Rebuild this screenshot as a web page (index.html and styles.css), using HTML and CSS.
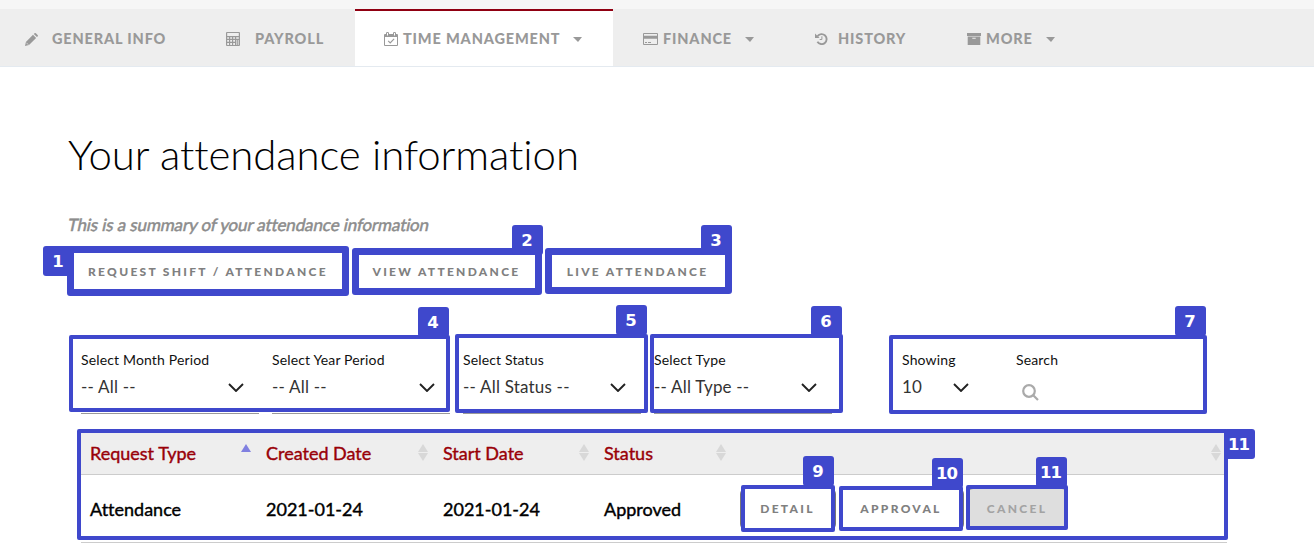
FILE: index.html
```html
<!DOCTYPE html>
<html lang="en">
<head>
<meta charset="utf-8">
<title>Your attendance information</title>
<link rel="stylesheet" href="styles.css">
</head>
<body>
<div class="page">
<nav class="tabs">
  <a class="tab tab-general"><svg class="icon" width="13" height="13" viewBox="0 0 13 13"><path d="M0 13l.9-4.1L8 1.8 11.1 5 4 12.1zM8.8 1l.7-.7q.7-.6 1.4 0L12.600 2q.7.7 0 1.400l-.7.7z"/><path d="M1.300 9.700l2 2" stroke="#eee" stroke-width=".7"/></svg><span>GENERAL INFO</span></a>
  <a class="tab tab-payroll"><svg class="icon" width="14" height="14" viewBox="0 0 14 14"><path fill-rule="evenodd" d="M1 0h12q1 0 1 1v12q0 1-1 1H1q-1 0-1-1V1q0-1 1-1zM1.200 1v3h11.600V1zM1.200 5.200v1.600H3V5.200zM4.200 5.200v1.600H6V5.200zM7.200 5.200v1.600H9V5.200zM10.200 5.200v1.600h2.600V5.200zM1.200 8v1.800H3V8zM4.200 8v1.800H6V8zM7.200 8v1.800H9V8zM1.200 11v1.900H3V11zM4.200 11v1.900H6V11zM7.200 11v1.900H9V11zM10.400 8v4.900h.8V8zM12.200 8v4.900h.6V8z"/></svg><span>PAYROLL</span></a>
  <a class="tab tab-time active"><svg class="icon" width="14" height="14" viewBox="0 0 14 14"><path fill-rule="evenodd" d="M1 2h1V1q0-1 1.500-1T5 1v1h4V1q0-1 1.500-1T12 1v1h1q1 0 1 1v10q0 1-1 1H1q-1 0-1-1V3q0-1 1-1zM1 5v8h12V5zM3 1v2.500h1V1zM10 1v2.500h1V1z"/><path d="M4.200 8.800l2 2 3.900-3.900" fill="none" stroke="#999" stroke-width="1.200"/></svg><span>TIME MANAGEMENT</span><i class="caret"></i></a>
  <a class="tab tab-finance"><svg class="icon" width="15" height="12" viewBox="0 0 15 12"><path fill-rule="evenodd" d="M1 0h13q1 0 1 1v10q0 1-1 1H1q-1 0-1-1V1q0-1 1-1zM1 1v1.700h13V1zM1 5.800V11h13V5.800z"/><path d="M2 9h2v1H2zM5 9h3v1H5z"/></svg><span>FINANCE</span><i class="caret"></i></a>
  <a class="tab tab-history"><svg class="icon" width="13" height="12" viewBox="0 0 13 12"><path d="M2.600 3.100A5 5 0 1 1 2.400 8.800" fill="none" stroke="#999" stroke-width="1.900"/><path d="M0 .5v4.400h4.600z"/><path d="M6.900 3.300v3.200H4.700" fill="none" stroke="#999"/></svg><span>HISTORY</span></a>
  <a class="tab tab-more"><svg class="icon" width="14" height="12" viewBox="0 0 14 12"><path fill-rule="evenodd" d="M0 0h14v3H0zM.7 3.600h12.600V12H.7zM5.300 4.700v1h3.400v-1z"/></svg><span>MORE</span><i class="caret"></i></a>
</nav>
<main class="content">
  <h1 class="title">Your attendance information</h1>
  <p class="summary">This is a summary of your attendance information</p>
  <div class="actions">
    <button class="btn btn-request">REQUEST SHIFT / ATTENDANCE</button>
    <button class="btn btn-view">VIEW ATTENDANCE</button>
    <button class="btn btn-live">LIVE ATTENDANCE</button>
  </div>
  <div class="filters">
    <label class="field"><span class="label">Select Month Period</span><span class="select">-- All --<svg class="chevron" viewBox="0 0 16 9"><path d="M1 1l7 7 7-7"/></svg></span></label>
    <label class="field"><span class="label">Select Year Period</span><span class="select">-- All --<svg class="chevron" viewBox="0 0 16 9"><path d="M1 1l7 7 7-7"/></svg></span></label>
    <label class="field"><span class="label">Select Status</span><span class="select">-- All Status --<svg class="chevron" viewBox="0 0 16 9"><path d="M1 1l7 7 7-7"/></svg></span></label>
    <label class="field"><span class="label">Select Type</span><span class="select">-- All Type --<svg class="chevron" viewBox="0 0 16 9"><path d="M1 1l7 7 7-7"/></svg></span></label>
    <label class="field field-count"><span class="label">Showing</span><span class="select plain">10<svg class="chevron" viewBox="0 0 16 9"><path d="M1 1l7 7 7-7"/></svg></span></label>
    <label class="field field-search"><span class="label">Search</span><svg class="search" width="17" height="17" viewBox="0 0 17 17"><circle cx="7" cy="7" r="5.800"/><path d="M11 11l5 5"/></svg></label>
  </div>
  <div class="table">
    <div class="row head">
      <div class="cell">Request Type<span class="sort asc"><i class="up"></i></span></div>
      <div class="cell">Created Date<span class="sort"><i class="up"></i><i class="down"></i></span></div>
      <div class="cell">Start Date<span class="sort"><i class="up"></i><i class="down"></i></span></div>
      <div class="cell">Status<span class="sort"><i class="up"></i><i class="down"></i></span></div>
      <div class="cell"><span></span><span class="sort"><i class="up"></i><i class="down"></i></span></div>
    </div>
    <div class="row body">
      <div class="cell">Attendance</div>
      <div class="cell">2021-01-24</div>
      <div class="cell">2021-01-24</div>
      <div class="cell">Approved</div>
      <div class="cell cell-actions">
        <button class="btn small btn-detail">DETAIL</button>
        <button class="btn small btn-approval">APPROVAL</button>
        <button class="btn small btn-cancel">CANCEL</button>
      </div>
    </div>
  </div>
</main>
<div class="frame thick f1"></div><b class="badge b1">1</b>
<div class="frame thick f2"></div><b class="badge b2">2</b>
<div class="frame thick f3"></div><b class="badge b3">3</b>
<div class="frame f4"></div><b class="badge b4">4</b>
<div class="frame f5"></div><b class="badge b5">5</b>
<div class="frame f6"></div><b class="badge b6">6</b>
<div class="frame f7"></div><b class="badge b7">7</b>
<div class="frame f8"></div><b class="badge b8">11</b>
<div class="frame f9"></div><b class="badge b9">9</b>
<div class="frame f10"></div><b class="badge b10">10</b>
<div class="frame f11"></div><b class="badge b11">11</b>
</div>
</body>
</html>
```
FILE: styles.css
```css
* { box-sizing: border-box; }
body { margin: 0; background: #fff; font-family: Lato, sans-serif; font-variant-ligatures: none; color: #000; }
.page { position: relative; width: 1314px; height: 544px; overflow: hidden; border-top: 9px solid #f6f6f6; }

/* Navigation */
.tabs { display: flex; height: 58px; background: #eee; border-bottom: 1px solid #e4eaf0; }
.tab { display: flex; align-items: center; padding: 3px 0 0 30px; color: #999; font-size: 14.500px; font-weight: 900; letter-spacing: .85px; white-space: nowrap; }
.tab span { margin-top: -2px; }
.tab-general { width: 196px; padding-left: 25px; }
.tab-payroll { width: 159px; }
.tab-time { width: 258px; padding-left: 29px; }
.tab-finance { width: 171px; }
.tab-history { width: 152px; padding-left: 31px; }
.tab-more { width: 147px; padding-left: 31px; }
.tab.active { background: #fff; border-top: 2px solid #900012; padding-top: 1px; }
.icon { fill: #999; margin-right: 5px; flex: none; }
.tab-general .icon, .tab-payroll .icon { margin-right: 15px; }
.tab-general .icon { margin-right: 14px; }
.tab-history .icon { margin-right: 10px; }
.caret { border: 4.500px solid transparent; border-left-width: 5px; border-top: 5px solid #999; border-bottom: 0; margin-left: 13px; }

/* Page heading */
.content { padding: 61px 0 0 68px; }
.title { margin: 0; height: 52px; line-height: 52px; font-size: 42px; font-weight: 300; letter-spacing: -.1px; white-space: nowrap; }
.summary { margin: 32px 0 0; height: 26px; line-height: 26px; width: max-content; font-size: 17px; letter-spacing: -.12px; transform: skewX(-12deg); color: #8c8c8c; -webkit-text-stroke: .5px #8c8c8c; white-space: nowrap; }
.actions { display: flex; gap: 4px; margin-top: 10px; height: 46px; }
.btn { padding: 0; border: 1px solid #777; border-radius: 5px; background: #fff; color: #808080; font: 900 12px Lato, sans-serif; letter-spacing: 2.300px; text-align: center; white-space: nowrap; }
.btn-request { width: 280px; }
.btn-view { width: 189px; }
.btn-live { width: 185px; height: 45px; padding-top: 1px; }

/* Filters */
.filters { display: flex; gap: 13px; margin: 56px 0 0 13px; height: 64px; }
.field { display: flex; flex-direction: column; width: 178px; }
.label { height: 20px; line-height: 20px; font-size: 14px; letter-spacing: .15px; color: #111; }
.select { display: flex; align-items: center; justify-content: space-between; height: 44px; padding: 0 15px 10px 0; border-bottom: 1px solid #999; font-size: 17px; letter-spacing: .2px; color: #333; }
.plain { border-bottom: 0; padding-bottom: 11px; }
.chevron { width: 16px; height: 9px; margin-top: 2px; fill: none; stroke: #222; stroke-width: 1.900; }
.field-count { width: 82px; margin-left: 57px; }
.field-search { margin-left: 19px; }
.search { margin: 14px 0 0 6px; fill: none; stroke: #aaa; stroke-width: 2.200; }

/* Attendance table */
.table { width: 1146px; margin: 19px 0 0 13px; font-size: 18px; }
.row { display: grid; grid-template-columns: 176px 177px 161px 137px 495px; border-bottom: 1px solid #ccc; }
.head { height: 42px; background: #eee; color: #990008; -webkit-text-stroke: .4px #990008; }
.body { height: 68px; -webkit-text-stroke: .4px #000; }
.cell { display: flex; align-items: center; justify-content: space-between; padding: 0 6px 2px 9px; }
.body .cell { padding-top: 3px; }
.sort { display: flex; flex-direction: column; gap: 1px; height: 17px; }
.up, .down { border: 5px solid transparent; }
.up { border-top: 0; border-bottom: 8px solid #d8d8d8; }
.down { border-bottom: 0; border-top: 8px solid #d8d8d8; }
.asc .up { border-bottom-color: #8080e0; }
.body .cell-actions { justify-content: flex-start; gap: 3px; padding: 0 0 0 8px; -webkit-text-stroke: 0; }
.small { height: 42px; border-radius: 6px; padding-right: 1px; }
.btn-detail { width: 96px; }
.btn-approval { width: 125px; }
.btn-cancel { width: 101px; background: #dedede; color: #a3a3a3; }

/* Numbered callouts over the page */
.frame, .badge { position: absolute; margin-top: -9px; }
.frame { border: 4px solid #3f48cc; border-radius: 2px; }
.thick { border-width: 7px; border-radius: 3px; }
.badge { width: 31px; height: 30px; padding-right: 2px; border-radius: 3px; background: #3f48cc; color: #fff; font: bold 16.500px/32px "DejaVu Sans", sans-serif; letter-spacing: -1px; text-align: center; }
.f1 { left: 67px; top: 246px; width: 282px; height: 50px; }
.f2 { left: 352px; top: 248px; width: 190px; height: 47px; }
.f3 { left: 545px; top: 248px; width: 187px; height: 46px; }
.f4 { left: 69px; top: 335px; width: 381px; height: 77px; }
.f5 { left: 455px; top: 334px; width: 193px; height: 79px; }
.f6 { left: 650px; top: 334px; width: 193px; height: 79px; }
.f7 { left: 889px; top: 335px; width: 318px; height: 79px; }
.f8 { left: 77px; top: 429px; width: 1151px; height: 111px; }
.f9 { left: 741px; top: 485px; width: 94px; height: 47px; }
.f10 { left: 839px; top: 486px; width: 124px; height: 45px; }
.f11 { left: 966px; top: 485px; width: 102px; height: 45px; }
.b1 { left: 43px; top: 246px; }
.b2 { left: 512px; top: 225px; }
.b3 { left: 701px; top: 225px; }
.b4 { left: 418px; top: 307px; }
.b5 { left: 616px; top: 305px; }
.b6 { left: 811px; top: 306px; }
.b7 { left: 1175px; top: 306px; }
.b8 { left: 1224px; top: 429px; }
.b9 { left: 803px; top: 456px; }
.b10 { left: 932px; top: 458px; }
.b11 { left: 1036px; top: 457px; }
```
